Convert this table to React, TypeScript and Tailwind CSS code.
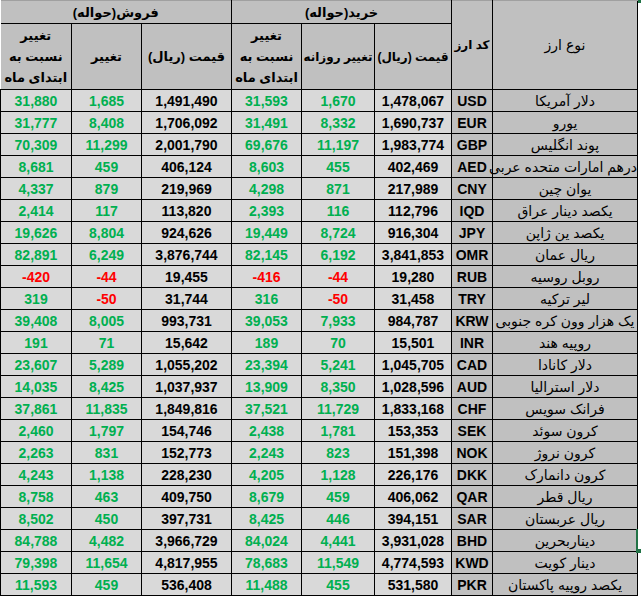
const rows: string[][] = [
  ["دلار آمریکا", "USD", "1,478,067", "1,670", "31,593", "1,491,490", "1,685", "31,880"],
  ["یورو", "EUR", "1,690,737", "8,332", "31,491", "1,706,092", "8,408", "31,777"],
  ["پوند انگلیس", "GBP", "1,983,774", "11,197", "69,676", "2,001,790", "11,299", "70,309"],
  ["درهم امارات متحده عربی", "AED", "402,469", "455", "8,603", "406,124", "459", "8,681"],
  ["یوان چین", "CNY", "217,989", "871", "4,298", "219,969", "879", "4,337"],
  ["یکصد دینار عراق", "IQD", "112,796", "116", "2,393", "113,820", "117", "2,414"],
  ["یکصد ین ژاپن", "JPY", "916,304", "8,724", "19,449", "924,626", "8,804", "19,626"],
  ["ریال عمان", "OMR", "3,841,853", "6,192", "82,145", "3,876,744", "6,249", "82,891"],
  ["روبل روسیه", "RUB", "19,280", "-44", "-416", "19,455", "-44", "-420"],
  ["لیر ترکیه", "TRY", "31,458", "-50", "316", "31,744", "-50", "319"],
  ["یک هزار وون کره جنوبی", "KRW", "984,787", "7,933", "39,053", "993,731", "8,005", "39,408"],
  ["روپیه هند", "INR", "15,501", "70", "189", "15,642", "71", "191"],
  ["دلار کانادا", "CAD", "1,045,705", "5,241", "23,394", "1,055,202", "5,289", "23,607"],
  ["دلار استرالیا", "AUD", "1,028,596", "8,350", "13,909", "1,037,937", "8,425", "14,035"],
  ["فرانک سویس", "CHF", "1,833,168", "11,729", "37,521", "1,849,816", "11,835", "37,861"],
  ["کرون سوئد", "SEK", "153,353", "1,781", "2,438", "154,746", "1,797", "2,460"],
  ["کرون نروژ", "NOK", "151,398", "823", "2,243", "152,773", "831", "2,263"],
  ["کرون دانمارک", "DKK", "226,176", "1,128", "4,205", "228,230", "1,138", "4,243"],
  ["ریال قطر", "QAR", "406,062", "459", "8,679", "409,750", "463", "8,758"],
  ["ریال عربستان", "SAR", "394,151", "446", "8,425", "397,731", "450", "8,502"],
  ["دیناربحرین", "BHD", "3,931,028", "4,441", "84,024", "3,966,729", "4,482", "84,788"],
  ["دینار کویت", "KWD", "4,774,593", "11,549", "78,683", "4,817,955", "11,654", "79,398"],
  ["یکصد روپیه پاکستان", "PKR", "531,580", "455", "11,488", "536,408", "459", "11,593"],
]

const cell = "border border-black p-0 text-center align-middle"

function Num({ v, price }: { v: string; price?: boolean }) {
  const color = price ? "text-black" : v.startsWith("-") ? "text-[#ff0000]" : "text-[#00b050]"
  return (
    <td className={`${cell} bg-[#d9d9d9] font-bold ${color}`}>
      <span dir="ltr">{v}</span>
    </td>
  )
}

export default function App() {
  return (
    <div className="relative h-[596px] w-[641px] overflow-hidden bg-white font-['Liberation_Sans','DejaVu_Sans',sans-serif] text-[14px] leading-none">
      <table dir="rtl" className="w-[638px] table-fixed border-collapse">
        <colgroup>
          <col className="w-[145px]" />
          <col className="w-[41px]" />
          <col className="w-[77px]" />
          <col className="w-[73px]" />
          <col className="w-[70px]" />
          <col className="w-[90px]" />
          <col className="w-[70px]" />
          <col className="w-[71px]" />
        </colgroup>
        <thead className="bg-[#c0c0c0] text-[13px] font-bold text-black">
          <tr className="h-[23px]">
            <th rowSpan={2} className={`${cell} border-t-[#a0a0a0] text-[14px] font-normal`}>نوع ارز</th>
            <th rowSpan={2} className={`${cell} border-t-[#a0a0a0] whitespace-nowrap text-[12px]`}>کد ارز</th>
            <th colSpan={3} className={`${cell} border-t-[#a0a0a0]`}>خرید(حواله)</th>
            <th colSpan={3} className={`${cell} border-t-[#a0a0a0] border-l-0`}>فروش(حواله)</th>
          </tr>
          <tr className="h-[66px]">
            <th className={`${cell} whitespace-nowrap text-[12px]`}>قیمت (ریال)</th>
            <th className={`${cell} whitespace-nowrap text-[12px]`}>تغییر روزانه</th>
            <th className={`${cell} leading-[21px]`}>تغییر<br />نسبت به<br />ابتدای ماه</th>
            <th className={`${cell} whitespace-nowrap`}>قیمت (ریال)</th>
            <th className={cell}>تغییر</th>
            <th className={`${cell} border-l-0 leading-[21px]`}>تغییر<br />نسبت به<br />ابتدای ماه</th>
          </tr>
        </thead>
        <tbody>
          {rows.map((r) => (
            <tr key={r[1]} className="h-[22px]">
              <td className={`${cell} bg-[#c0c0c0] whitespace-nowrap text-[14px] text-black`}>{r[0]}</td>
              <td className={`${cell} bg-[#c0c0c0] font-bold text-black`}>{r[1]}</td>
              <Num v={r[2]} price />
              <Num v={r[3]} />
              <Num v={r[4]} />
              <Num v={r[5]} price />
              <Num v={r[6]} />
              <Num v={r[7]} />
            </tr>
          ))}
        </tbody>
      </table>
      <div className="absolute right-0 top-0 h-[3px] w-[3px] bg-[#217346]" />
      <div className="absolute right-[3px] top-[529px] h-[22px] w-[2px] bg-[#217346]" />
      <div className="absolute right-0 top-[549px] h-[4px] w-[5px] bg-[#217346]" />
    </div>
  )
}
